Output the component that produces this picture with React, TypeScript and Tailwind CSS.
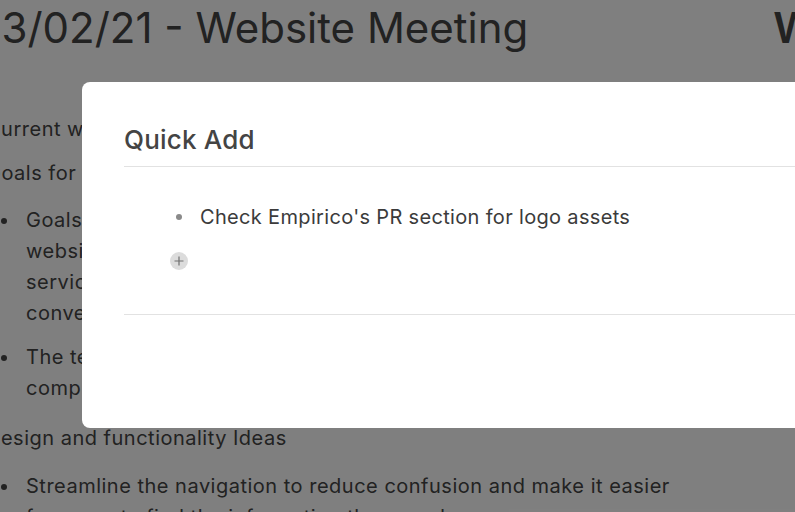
export default function App() {
  return (
    <div className="relative w-[795px] h-[512px] overflow-hidden bg-white font-['Inter','Noto_Sans',sans-serif]">
      <div className="ml-[-14px] w-[830px] text-[#444]">
        <div className="flex h-[114px] items-start justify-between pt-[2px]">
          <h1 className="ml-[-11px] whitespace-nowrap text-[42px] leading-[52px] font-normal">
            03/02/21 - Website Meeting
          </h1>
          <span className="text-[42px] leading-[52px] font-semibold">W</span>
        </div>
        <div className="w-[700px] text-[20px] leading-[31px] tracking-[0.5px]">
          <p className="whitespace-nowrap">Current website review and redesign kickoff</p>
          <p className="mt-[13px] whitespace-nowrap">Goals for the new site</p>
          <ul className="mt-[16px]">
            <li className="flex">
              <span className="mt-[13px] ml-[15px] h-[6px] w-[6px] shrink-0 rounded-full bg-[#444]" />
              <span className="ml-[19px] whitespace-nowrap">
                Goals: Update the look and feel of the
                <br />
                website and make it easier to find our
                <br />
                services, while improving the overall
                <br />
                conversion rate of the contact form
              </span>
            </li>
            <li className="mt-[13px] flex">
              <span className="mt-[13px] ml-[15px] h-[6px] w-[6px] shrink-0 rounded-full bg-[#444]" />
              <span className="ml-[19px] whitespace-nowrap">
                The team wants the new design to be
                <br />
                complete before the end of next quarter
              </span>
            </li>
          </ul>
          <p className="mt-[19px] whitespace-nowrap">Design and functionality Ideas</p>
          <ul className="mt-[17px]">
            <li className="flex">
              <span className="mt-[13px] ml-[15px] h-[6px] w-[6px] shrink-0 rounded-full bg-[#444]" />
              <span className="ml-[19px] whitespace-nowrap">
                Streamline the navigation to reduce confusion and make it easier
                <br />
                for users to find the information they need
              </span>
            </li>
          </ul>
        </div>
      </div>

      <div className="absolute inset-0 bg-black/50" />

      <div className="absolute left-[82px] top-[82px] h-[346px] w-[800px] rounded-[8px] bg-white px-[42px] pt-[42px]">
        <h2 className="border-b border-[#e2e2e2] pb-[10px] text-[26px] leading-[32px] font-medium tracking-[0.2px] text-[#444]">
          Quick Add
        </h2>
        <div className="mt-[35px] flex items-center">
          <span className="ml-[52px] h-[6px] w-[6px] rounded-full bg-[#8a8a8a]" />
          <span className="ml-[18px] text-[20px] leading-[30px] tracking-[0.33px] text-[#3b3b3b]">
            Check Empirico's PR section for logo assets
          </span>
        </div>
        <div className="mt-[20px] ml-[46px] flex h-[18px] w-[18px] items-center justify-center rounded-full bg-[#dcdcdc]">
          <svg width="18" height="18" viewBox="0 0 18 18">
            <path d="M9 4.5v9M4.5 9h9" stroke="#707070" strokeWidth="1.2" fill="none" />
          </svg>
        </div>
        <div className="mt-[44px] border-t border-[#e2e2e2]" />
      </div>
    </div>
  );
}
